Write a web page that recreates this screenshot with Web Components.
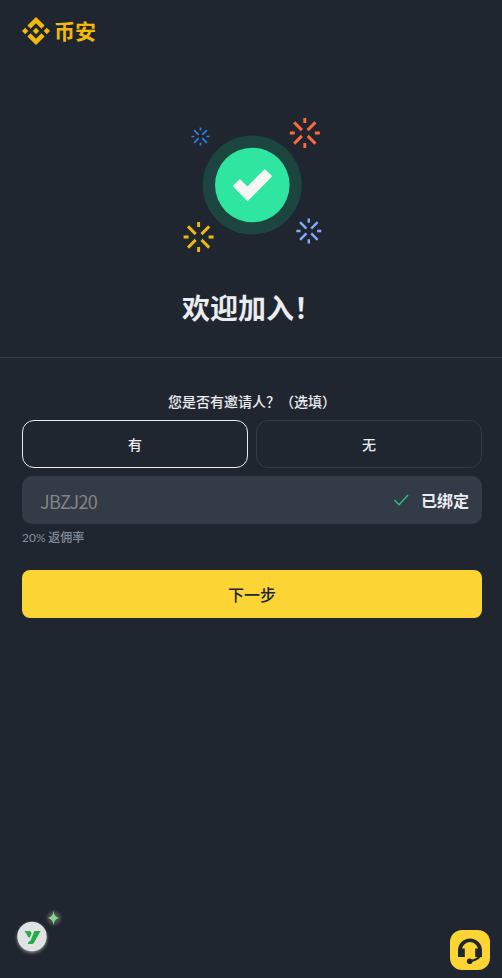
<!DOCTYPE html>
<html lang="zh-CN">
<head>
<meta charset="utf-8">
<title>欢迎加入</title>
<style>
html,body{margin:0;height:100%;background:#202630}
body{font-family:"Noto Sans CJK SC",sans-serif;color:#eaecef}
</style>
</head>
<body>
<welcome-page></welcome-page>
<script>
const define = (name, html) => customElements.define(name, class extends HTMLElement {
  constructor() {
    super();
    this.attachShadow({ mode: 'open' }).innerHTML = html;
  }
});

define('brand-logo', `
<style>
:host{display:flex;align-items:flex-start;gap:4px;height:28px;color:#f0b90b}
svg{width:28px;height:28px;display:block}
span{font-size:21px;font-weight:600;line-height:26px}
</style>
<svg viewBox="0 0 126.61 126.61" fill="currentColor"><path d="M38.73 53.2 63.3 28.63l24.59 24.58 14.3-14.3L63.3 0 24.43 38.9zM0 63.31 14.3 49l14.3 14.31-14.3 14.29zM38.73 73.41 63.3 98l24.59-24.59 14.31 14.29-38.9 38.91-38.9-38.87zM98 63.31 112.3 49l14.31 14.3-14.31 14.3zM77.83 63.3 63.3 48.78 48.8 63.3l14.5 14.5z"/></svg>
<span><slot></slot></span>`);

const burst = (x, y, scale, color) => `<g transform="translate(${x} ${y}) scale(${scale})" stroke="${color}" stroke-width="2.9">
<path d="M0-15v5M0 10v5M-15 0h5M10 0h5M-10.6-10.6l7.7 7.7M10.6-10.6l-7.7 7.7M-10.6 10.6l7.7-7.7M10.6 10.6l-7.7-7.7"/></g>`;

define('success-art', `
<style>:host{display:block;width:144px;height:140px}svg{display:block}</style>
<svg width="144" height="140" viewBox="180 115 144 140" fill="none">
<circle cx="252.2" cy="185" r="49.5" fill="#1d453f"/>
<circle cx="252.3" cy="185" r="37.3" fill="#2ee6a0"/>
<path d="m232.7 185.9 7.2-7 7.6 7.5 17.3-17.5 7.5 7.3-24.8 25z" fill="#f5f5f5"/>
${burst(200.5, 136.5, .6, '#2f80df')}
${burst(304.8, 133, 1, '#ff693d')}
${burst(198.6, 237, 1, '#f0b90b')}
${burst(308.8, 231, .83, '#84aaff')}
</svg>`);

define('choice-button', `
<style>
:host{display:flex;flex:1;box-sizing:border-box;height:48px;align-items:center;justify-content:center;border:1px solid #333b47;border-radius:12px;font-size:14px;font-weight:500;line-height:22px}
:host([selected]){border-color:#eaecef}
</style><slot></slot>`);

define('referral-field', `
<style>
:host{display:flex;box-sizing:border-box;height:48px;align-items:center;background:#333b47;border-radius:10px;padding:0 13px 0 18px}
.code{flex:1;font-size:18px;font-weight:400;line-height:24px;letter-spacing:-.7px;color:#848484;padding-top:1px}
svg{width:16px;height:14px;margin-right:12px;display:block}
.status{font-size:16px;font-weight:600;line-height:24px;padding-bottom:1px}
</style>
<span class="code"><slot></slot></span>
<svg viewBox="0 0 16 14" fill="none" stroke="#2ebd85" stroke-width="1.4"><path d="m1.3 7 4.8 4.7L15 2"/></svg>
<span class="status"><slot name="status"></slot></span>`);

define('primary-button', `
<style>:host{display:flex;height:48px;align-items:center;justify-content:center;background:#fcd535;color:#202630;border-radius:8px;font-size:16px;font-weight:500;line-height:24px}</style>
<slot></slot>`);

define('assistant-badge', `
<style>:host{display:block;position:absolute;left:10px;top:904px;width:58px;height:56px}svg{display:block}</style>
<svg width="58" height="56" viewBox="10 904 58 56">
<defs>
<filter id="s" x="-40%" y="-40%" width="180%" height="180%"><feGaussianBlur stdDeviation="1.5"/></filter>
<radialGradient id="h"><stop offset=".25" stop-color="#596063"/><stop offset="1" stop-color="#202630"/></radialGradient>
<linearGradient id="g"><stop stop-color="#d1d78a"/><stop offset=".5" stop-color="#7cd985"/><stop offset="1" stop-color="#b9d8b2"/></linearGradient>
</defs>
<circle cx="32" cy="938" r="15" fill="#84888d" filter="url(#s)"/>
<circle cx="32" cy="936.5" r="14.7" fill="#e1e2e3"/>
<path d="M24.5 931h5.7l1.5 2.2-1.9 4.3c-2-.2-2.4-1.8-3.1-3.3zM34.4 931h6.2l-6.5 11.5q-.8 1.5-2.4 1.5h-4l1.2-2.7h1.4z" fill="#24ac48"/>
<circle cx="54" cy="918" r="9" fill="url(#h)"/>
<path d="M53.5 910.5c.8 5.2 1.7 6.6 6.2 7.5-4.5.9-5.4 2.3-6.2 7.5-.8-5.2-1.7-6.6-6.2-7.5 4.5-.9 5.4-2.3 6.2-7.5z" fill="url(#g)"/>
</svg>`);

define('support-button', `
<style>:host{display:flex;position:absolute;left:450px;top:930px;width:40px;height:40px;border-radius:12px;background:#fcd535}svg{display:block}</style>
<svg width="40" height="40" viewBox="0 0 40 40" fill="#202630">
<path d="M8 27v-6.5a12 12 0 0 1 24 0V27h-6.8v-8.5h2.8a8.2 8.2 0 0 0-16 0h2.8V27z"/>
<path d="M30.8 25q-2.5 4.5-10.8 6.2" fill="none" stroke="#202630" stroke-width="2.2"/>
<circle cx="19.7" cy="31.2" r="2.8"/>
</svg>`);

define('welcome-page', `
<style>
:host{display:block;position:relative;box-sizing:border-box;height:978px;overflow:hidden;background:#202630}
header{padding:17px 22px 0;height:98px;box-sizing:border-box}
.hero{box-sizing:border-box;height:260px;padding:17px 0 0 2px;display:flex;flex-direction:column;align-items:center;border-bottom:1px solid #333b47}
h1{margin:32px 0 0;font-size:28px;font-weight:600;line-height:40px;white-space:nowrap}
main{padding:32px 20px 0 22px;display:flex;flex-direction:column}
.q{font-size:14px;font-weight:500;line-height:22px;text-align:center;margin-bottom:8px}
.row{display:flex;gap:8px;margin-bottom:8px}
.rate{box-sizing:border-box;height:46px;font:12px/20px Lato,"Noto Sans CJK SC",sans-serif;color:#848e9c;padding-top:3px;word-spacing:-.5px}
.rate b{font-family:"Noto Sans CJK SC";font-weight:500}
</style>
<header><brand-logo>币安</brand-logo></header>
<section class="hero"><success-art></success-art><h1>欢迎加入！</h1></section>
<main>
<div class="q">您是否有邀请人？（选填）</div>
<div class="row"><choice-button selected>有</choice-button><choice-button>无</choice-button></div>
<referral-field>JBZJ20<span slot="status">已绑定</span></referral-field>
<div class="rate">20% <b>返佣率</b></div>
<primary-button>下一步</primary-button>
</main>
<assistant-badge></assistant-badge>
<support-button></support-button>`);
</script>
</body>
</html>
